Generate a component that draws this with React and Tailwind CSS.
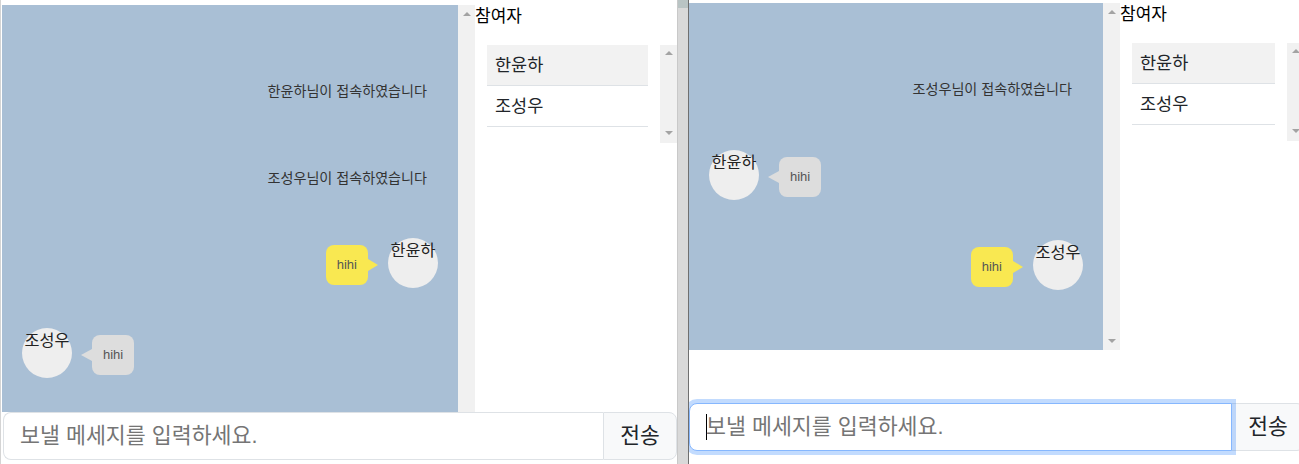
import React from "react";

const FONT = "font-['Liberation_Sans','Noto_Sans_CJK_KR',sans-serif]";

function UpArrow() {
  return <div className="w-0 h-0 border-x-[4px] border-x-transparent border-b-[4px] border-b-[#a3a3a3]" />;
}
function DownArrow() {
  return <div className="w-0 h-0 border-x-[4px] border-x-transparent border-t-[4px] border-t-[#a3a3a3]" />;
}

function ChatScrollbar({ showDown }) {
  return (
    <div className="w-[17px] shrink-0 bg-[#f1f1f1] flex flex-col items-center justify-between pt-[7px] pb-[7px]">
      <UpArrow />
      {showDown ? <DownArrow /> : <div />}
    </div>
  );
}

function ListScrollbar() {
  return (
    <div className="w-[17px] shrink-0 bg-[#f1f1f1] flex flex-col items-center justify-between pt-[6px] pb-[8px]">
      <UpArrow />
      <DownArrow />
    </div>
  );
}

function Avatar({ name }) {
  return (
    <div className="w-[50px] h-[50px] shrink-0 rounded-full bg-[#eeeeee] flex justify-center text-[16.3px] leading-[24px] text-[#222] whitespace-nowrap">
      {name}
    </div>
  );
}

function Notice({ text, mt }) {
  return (
    <div className={`${mt} h-[50px] flex items-center justify-end pr-[31px] text-[14.1px] text-[#333]`}>
      {text}
    </div>
  );
}

function MyMessage({ name, text, mt }) {
  return (
    <div className={`${mt} flex justify-end items-start pr-[20px]`}>
      <div className="mt-[7px] flex items-center">
        <div className="bg-[#f9e851] rounded-[8px] px-[11px] py-[10px] text-[13px] leading-[20px] text-[#555]">
          {text}
        </div>
        <div className="w-0 h-0 border-y-[6px] border-y-transparent border-l-[10px] border-l-[#f9e851]" />
      </div>
      <div className="ml-[10px]">
        <Avatar name={name} />
      </div>
    </div>
  );
}

function OtherMessage({ name, text, mt }) {
  return (
    <div className={`${mt} flex items-start pl-[20px]`}>
      <Avatar name={name} />
      <div className="ml-[9px] mt-[7px] flex items-center">
        <div className="w-0 h-0 border-y-[6px] border-y-transparent border-r-[11px] border-r-[#dddddd]" />
        <div className="bg-[#dddddd] rounded-[8px] px-[11px] py-[10px] text-[13px] leading-[20px] text-[#555]">
          {text}
        </div>
      </div>
    </div>
  );
}

function Sidebar({ width }) {
  return (
    <div className={`${width} shrink-0 flex flex-col`}>
      <div className="h-[24px] text-[17px] leading-[24px] text-black whitespace-nowrap">참여자</div>
      <div className="mt-[16px] h-[98px] flex pl-[12px]">
        <div className="flex-1 mr-[12px] flex flex-col">
          <div className="h-[41px] bg-[#f2f2f2] border-b border-[#dee2e6] pl-[8px] flex items-center text-[17.5px] text-[#212529]">
            한윤하
          </div>
          <div className="h-[41px] bg-white border-b border-[#dee2e6] pl-[8px] flex items-center text-[17.5px] text-[#212529]">
            조성우
          </div>
        </div>
        <ListScrollbar />
      </div>
    </div>
  );
}

function InputGroup({ focused, inputWidth }) {
  return (
    <div className="flex h-[48px]">
      {focused ? (
        <div
          className={`${inputWidth} relative z-10 h-full bg-white border border-[#86b7fe] rounded-l-[8px] shadow-[0_0_0_4px_rgba(13,110,253,0.25)] flex items-center pl-[16px] text-[21.7px] text-[#757575] whitespace-nowrap`}
        >
          <span className="inline-block w-px h-[26px] bg-black -mr-px" />
          <span>보낼 메세지를 입력하세요.</span>
        </div>
      ) : (
        <div
          className={`${inputWidth} h-full bg-white border-y border-l border-[#dee2e6] rounded-l-[8px] flex items-center pl-[16px] text-[21.7px] text-[#757575] whitespace-nowrap`}
        >
          보낼 메세지를 입력하세요.
        </div>
      )}
      <div className={`w-[74px] shrink-0 h-full ${focused ? "-ml-px" : ""} bg-[#f8f9fa] border border-[#dee2e6] rounded-r-[8px] flex items-center justify-center text-[21.5px] text-[#212529]`}>
        전송
      </div>
    </div>
  );
}

export default function App() {
  return (
    <div className={`${FONT} flex w-[1299px] h-[464px] bg-white overflow-hidden`}>
      {/* Left window */}
      <div className="w-[677px] shrink-0 flex flex-col pt-[5px] border-l border-[#d4d4d4]">
        <div className="h-[407px] flex ml-[1px]">
          <div className="w-[456px] shrink-0 bg-[#a9bfd5] flex flex-col">
            <Notice text="한윤하님이 접속하였습니다" mt="mt-[62px]" />
            <Notice text="조성우님이 접속하였습니다" mt="mt-[37px]" />
            <MyMessage name="한윤하" text="hihi" mt="mt-[34px]" />
            <OtherMessage name="조성우" text="hihi" mt="mt-[40px]" />
          </div>
          <ChatScrollbar showDown={false} />
          <Sidebar width="w-[202px]" />
        </div>
        <div className="ml-[2px]">
          <InputGroup focused={false} inputWidth="w-[600px]" />
        </div>
      </div>

      {/* Divider */}
      <div className="w-[12px] shrink-0 flex flex-col border-l border-[#c9c9c9] border-r border-r-[#6f6f6f] bg-[#d9d9d9]">
        <div className="h-[8px] bg-[#b9c4c4]" />
      </div>

      {/* Right window */}
      <div className="w-[610px] shrink-0 overflow-hidden">
        <div className="w-[616px] flex flex-col pt-[3px]">
          <div className="h-[347px] flex">
            <div className="w-[414px] shrink-0 bg-[#a9bfd5] flex flex-col">
              <Notice text="조성우님이 접속하였습니다" mt="mt-[62px]" />
              <OtherMessage name="한윤하" text="hihi" mt="mt-[35px]" />
              <MyMessage name="조성우" text="hihi" mt="mt-[40px]" />
            </div>
            <ChatScrollbar showDown={true} />
            <Sidebar width="w-[184px]" />
          </div>
          <div className="mt-[53px]">
            <InputGroup focused={true} inputWidth="w-[543px]" />
          </div>
        </div>
      </div>
    </div>
  );
}
